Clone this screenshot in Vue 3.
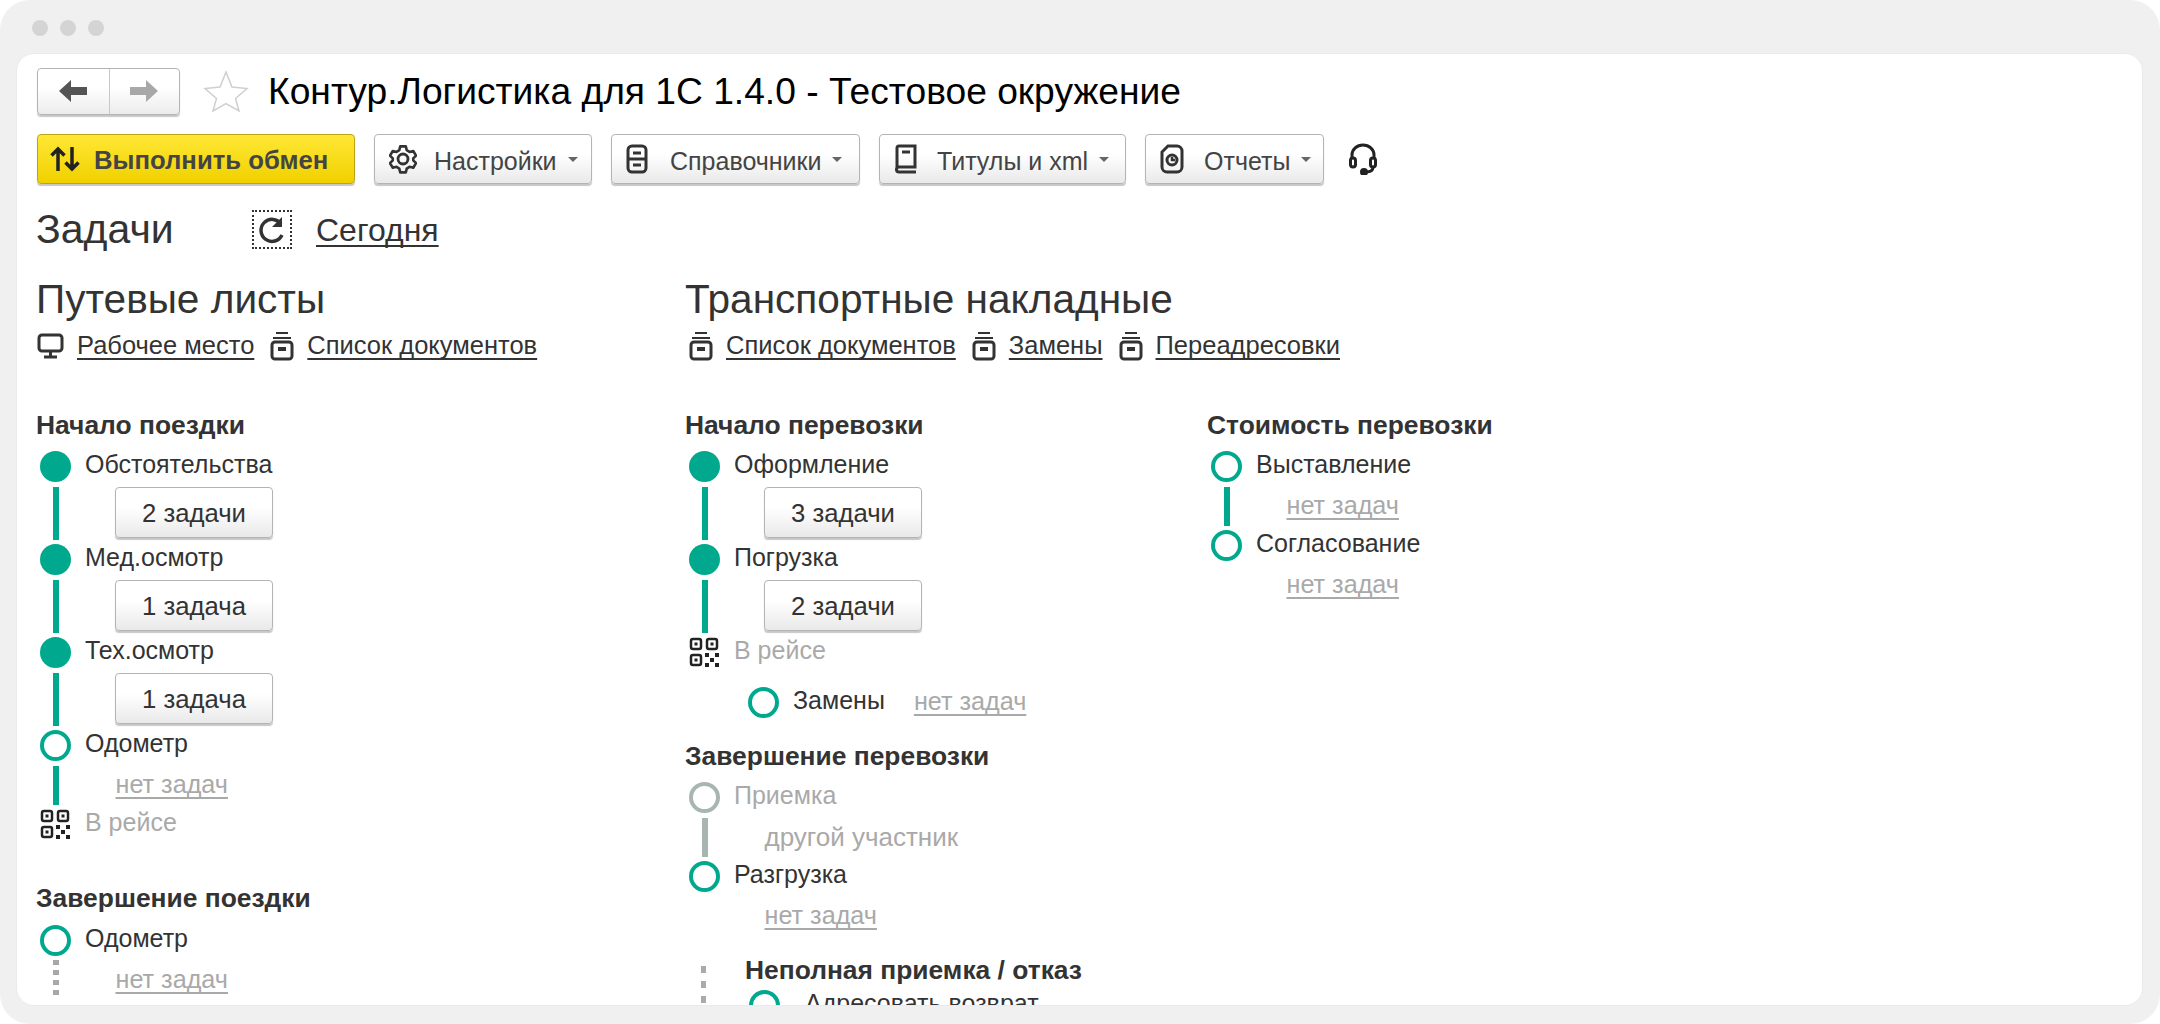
<script setup>
const col1a = [
  { node: 'filled', label: 'Обстоятельства', task: '2 задачи', line: 'green' },
  { node: 'filled', label: 'Мед.осмотр', task: '1 задача', line: 'green' },
  { node: 'filled', label: 'Тех.осмотр', task: '1 задача', line: 'green' },
  { node: 'open', label: 'Одометр', none: 'нет задач', line: 'green' },
  { node: 'qr', label: 'В рейсе', muted: true }
]
const col1b = [{ node: 'open', label: 'Одометр', none: 'нет задач', line: 'dotted' }]
const col2a = [
  { node: 'filled', label: 'Оформление', task: '3 задачи', line: 'green' },
  { node: 'filled', label: 'Погрузка', task: '2 задачи', line: 'green' },
  { node: 'qr', label: 'В рейсе', muted: true }
]
const col2b = [
  { node: 'gray', label: 'Приемка', muted: true, other: 'другой участник', line: 'gray' },
  { node: 'open', label: 'Разгрузка', none: 'нет задач', line: 'blank' }
]
const col3 = [
  { node: 'open', label: 'Выставление', none: 'нет задач', line: 'green' },
  { node: 'open', label: 'Согласование', none: 'нет задач', line: 'blank' }
]
const groups = [
  { cls: 'col-a', title: 'Путевые листы', links: [['monitor', 'Рабочее место'], ['box', 'Список документов']] },
  { cls: 'col-b', title: 'Транспортные накладные', links: [['box', 'Список документов'], ['box', 'Замены'], ['box', 'Переадресовки']] }
]
const tools = [
  { icon: 'gear', label: 'Настройки', cls: 't1' },
  { icon: 'ref', label: 'Справочники', cls: 't2' },
  { icon: 'book', label: 'Титулы и xml', cls: 't3' },
  { icon: 'report', label: 'Отчеты', cls: 't4' }
]
</script>

<template>
  <div class="frame">
    <div class="dots"><i></i><i></i><i></i></div>
    <div class="window">
      <header class="head">
        <div class="nav">
          <button class="nav-btn"><svg width="28" height="22" viewBox="0 0 28 22"><path d="M0 11 12 0v7h16v8H12v7z" fill="#555"/></svg></button>
          <button class="nav-btn"><svg width="28" height="22" viewBox="0 0 28 22"><path d="M28 11 16 0v7H0v8h16v7z" fill="#a8a8a8"/></svg></button>
        </div>
        <svg class="star" width="46" height="43" viewBox="0 0 46 43"><path d="M23 2l6 15 15 1.500-11.500 10L36 41 23 33.500 10 41l3.500-12.500L2 18.500 17 17z" fill="#fff" stroke="#cfcfcf" stroke-width="1.500"/></svg>
        <h1 class="title">Контур.Логистика для 1С 1.4.0 - Тестовое окружение</h1>
      </header>

      <div class="toolbar">
        <button class="btn exec">
          <svg width="30" height="26" viewBox="0 0 30 26" fill="none" stroke="#222" stroke-width="3.500"><path d="M8 25V3M1.500 9.500 8 3l6.500 6.500M22 1v22M15.500 16.500 22 23l6.500-6.500"/></svg>
          <span class="exec-label">Выполнить обмен</span>
        </button>
        <button v-for="t in tools" :key="t.label" class="btn tool" :class="t.cls">
          <svg v-if="t.icon === 'gear'" width="28" height="30" viewBox="0 0 28 30" fill="none" stroke="#333" stroke-width="2.800" stroke-linejoin="round"><path d="M11 2h6l1 4 3 2 4-1 3 5-3 3v2l3 3-3 5-4-1-3 2-1 4h-6l-1-4-3-2-4 1-3-5 3-3v-2l-3-3 3-5 4 1 3-2z" transform="translate(1 .5) scale(.93)"/><circle cx="14" cy="15" r="5"/></svg>
          <svg v-else-if="t.icon === 'ref'" width="22" height="30" viewBox="0 0 22 30" fill="none" stroke="#333" stroke-width="3"><rect x="2" y="2" width="18" height="26" rx="4"/><path d="M2 15h18M7 9h8M7 21h8"/></svg>
          <svg v-else-if="t.icon === 'book'" width="24" height="30" viewBox="0 0 24 30" fill="none" stroke="#333" stroke-width="3"><path d="M3 24V4a2 2 0 0 1 2-2h16v21H5a2.500 2.500 0 0 0 0 5h17"/><path d="M8 8h8"/></svg>
          <svg v-else width="24" height="30" viewBox="0 0 24 30" fill="none" stroke="#333" stroke-width="3"><path d="M8 2h9a5 5 0 0 1 5 5v16a5 5 0 0 1-5 5H7a5 5 0 0 1-5-5V8z"/><circle cx="12" cy="16" r="5"/><path d="M12 13v3h3" stroke-width="2.500"/></svg>
          <span class="tool-label">{{ t.label }}</span>
          <b class="caret"></b>
        </button>
        <svg class="headset" width="30" height="32" viewBox="0 0 30 32" fill="none" stroke="#222" stroke-width="3"><path d="M4 15v-3a11 10 0 0 1 22 0v3"/><rect x="2.500" y="15" width="5" height="9" rx="2.500"/><rect x="22.500" y="15" width="5" height="9" rx="2.500"/><path d="M25 24c0 4-3 5-7 5"/><circle cx="16" cy="29" r="2.500" fill="#222"/></svg>
      </div>

      <div class="tasks-row">
        <h2 class="tasks">Задачи</h2>
        <span class="refresh"><svg width="30" height="30" viewBox="0 0 30 30" fill="none" stroke="#333" stroke-width="3.500"><path d="M25 20a11 11 0 1 1-1-11"/><path d="M25 2v10h-10z" fill="#333" stroke="none"/></svg></span>
        <a class="link today">Сегодня</a>
      </div>

      <div class="columns">
        <section v-for="(g, gi) in groups" :key="g.title" class="group" :class="g.cls">
          <h3 class="group-title">{{ g.title }}</h3>
          <div class="links">
            <span v-for="l in g.links" :key="l[1]" class="doc-link">
              <svg v-if="l[0] === 'monitor'" width="27" height="26" viewBox="0 0 27 26" fill="none" stroke="#333" stroke-width="3"><rect x="2" y="2" width="23" height="16" rx="3"/><path d="M13.500 18v5M7 24h13"/></svg>
              <svg v-else width="24" height="30" viewBox="0 0 24 30" fill="none" stroke="#333" stroke-width="3"><path d="M6 2h12" stroke-width="2"/><path d="M3 7h18" stroke-width="2"/><rect x="2" y="11" width="20" height="17" rx="3"/><path d="M8 18h8" stroke-width="4"/></svg>
              <a class="link">{{ l[1] }}</a>
            </span>
          </div>

          <div v-if="gi === 0" class="flow">
            <h4 class="sub">Начало поездки</h4>
            <div v-for="s in col1a" :key="s.label" class="step" :class="{ 'step-qr': s.node === 'qr' }">
              <div class="row">
                <svg v-if="s.node === 'qr'" class="qr" width="30" height="30" viewBox="0 0 30 30"><g fill="none" stroke="#222" stroke-width="2.500"><rect x="2" y="2" width="10" height="10" rx="2"/><rect x="18" y="2" width="10" height="10" rx="2"/><rect x="2" y="18" width="10" height="10" rx="2"/></g><g fill="#222"><rect x="5.500" y="5.500" width="3" height="3"/><rect x="21.500" y="5.500" width="3" height="3"/><rect x="5.500" y="21.500" width="3" height="3"/><rect x="16" y="16" width="4" height="4"/><rect x="26" y="16" width="4" height="4"/><rect x="21" y="21" width="4" height="4"/><rect x="16" y="26" width="4" height="4"/><rect x="26" y="26" width="4" height="4"/></g></svg>
                <i v-else class="node" :class="s.node"></i>
                <span class="label" :class="{ muted: s.muted }">{{ s.label }}</span>
              </div>
              <div v-if="s.line" class="conn" :class="{ tall: s.task }">
                <i class="line" :class="s.line"></i>
                <button v-if="s.task" class="btn task">{{ s.task }}</button>
                <a v-else class="link none">{{ s.none }}</a>
              </div>
            </div>
            <h4 class="sub second">Завершение поездки</h4>
            <div v-for="s in col1b" :key="s.label" class="step">
              <div class="row"><i class="node" :class="s.node"></i><span class="label">{{ s.label }}</span></div>
              <div class="conn"><i class="line" :class="s.line"></i><a class="link none">{{ s.none }}</a></div>
            </div>
          </div>

          <div v-else class="flow-cols">
            <div class="flow mid">
              <h4 class="sub">Начало перевозки</h4>
              <div v-for="s in col2a" :key="s.label" class="step" :class="{ 'step-qr': s.node === 'qr' }">
                <div class="row">
                  <svg v-if="s.node === 'qr'" class="qr" width="30" height="30" viewBox="0 0 30 30"><g fill="none" stroke="#222" stroke-width="2.500"><rect x="2" y="2" width="10" height="10" rx="2"/><rect x="18" y="2" width="10" height="10" rx="2"/><rect x="2" y="18" width="10" height="10" rx="2"/></g><g fill="#222"><rect x="5.500" y="5.500" width="3" height="3"/><rect x="21.500" y="5.500" width="3" height="3"/><rect x="5.500" y="21.500" width="3" height="3"/><rect x="16" y="16" width="4" height="4"/><rect x="26" y="16" width="4" height="4"/><rect x="21" y="21" width="4" height="4"/><rect x="16" y="26" width="4" height="4"/><rect x="26" y="26" width="4" height="4"/></g></svg>
                  <i v-else class="node" :class="s.node"></i>
                  <span class="label" :class="{ muted: s.muted }">{{ s.label }}</span>
                </div>
                <div v-if="s.line" class="conn tall">
                  <i class="line" :class="s.line"></i>
                  <button class="btn task">{{ s.task }}</button>
                </div>
              </div>
              <div class="inline-step">
                <i class="node open"></i>
                <span class="label">Замены</span>
                <a class="link none">нет задач</a>
              </div>
              <h4 class="sub third">Завершение перевозки</h4>
              <div v-for="s in col2b" :key="s.label" class="step">
                <div class="row"><i class="node" :class="s.node"></i><span class="label" :class="{ muted: s.muted }">{{ s.label }}</span></div>
                <div class="conn">
                  <i class="line" :class="s.line"></i>
                  <span v-if="s.other" class="other">{{ s.other }}</span>
                  <a v-else class="link none">{{ s.none }}</a>
                </div>
              </div>
              <div class="partial">
                <i class="dash"></i>
                <div class="partial-body">
                  <h4 class="sub">Неполная приемка / отказ</h4>
                  <div class="row"><i class="node open"></i><span class="label wide">Адресовать возврат</span></div>
                </div>
              </div>
            </div>
            <div class="flow last">
              <h4 class="sub">Стоимость перевозки</h4>
              <div v-for="s in col3" :key="s.label" class="step">
                <div class="row"><i class="node" :class="s.node"></i><span class="label">{{ s.label }}</span></div>
                <div class="conn">
                  <i class="line" :class="s.line"></i>
                  <a class="link none">{{ s.none }}</a>
                </div>
              </div>
            </div>
          </div>
        </section>
      </div>
    </div>
  </div>
</template>

<style>
html, body { margin: 0; background: #fff; }
</style>

<style scoped>
.frame {
  box-sizing: border-box;
  height: 1024px;
  padding: 0 17px 18px 16px;
  background: #f0f0f0;
  border-radius: 30px;
  overflow: hidden;
  display: flex;
  flex-direction: column;
  font-family: "Liberation Sans", Arial, sans-serif;
  color: #333;
}
.dots { display: flex; gap: 12px; height: 53px; padding: 20px 0 0 16px; box-sizing: border-box; flex: none; }
.dots i { width: 16px; height: 16px; border-radius: 50%; background: #d4d4d4; }
.window {
  flex: 1;
  min-height: 0;
  background: #fff;
  border: 1px solid #eaeaea;
  border-radius: 18px;
  overflow: hidden;
  box-sizing: border-box;
  padding: 13px 0 0 19px;
}
.head { display: flex; align-items: center; height: 48px; margin-left: 1px; }
.nav { display: flex; width: 143px; height: 47px; box-sizing: border-box; border: 1px solid #b4b4b4; border-radius: 4px; background: linear-gradient(#fff 40%, #ececec); box-shadow: 0 2px 1px rgba(0,0,0,.22); }
.nav-btn { width: 50%; border: 0; background: none; padding: 0; display: flex; align-items: center; justify-content: center; }
.nav-btn + .nav-btn { border-left: 1px solid #c8c8c8; }
.star { margin-left: 23px; }
.title { margin: 0 0 0 19px; font-size: 37.200px; font-weight: 400; color: #000; line-height: 48px; white-space: nowrap; }
.toolbar { display: flex; align-items: center; margin: 19px 0 0 1px; height: 50px; }
.btn { box-sizing: border-box; font: inherit; font-size: 25px; color: #444; border: 1px solid #b4b4b4; border-radius: 4px; background: linear-gradient(#fff 40%, #e9e9e9); box-shadow: 0 2px 1px rgba(0,0,0,.22); display: flex; align-items: center; padding: 0; white-space: nowrap; }
.exec { width: 318px; height: 50px; padding-left: 12px; gap: 14px; background: linear-gradient(#ffe835, #f0d000); border-color: #bba515; font-weight: 700; font-size: 25.700px; color: #444; margin-right: 19px; }
.exec-label { padding-top: 3px; }
.tool { height: 50px; padding-left: 14px; margin-right: 19px; }
.tool-label { margin-left: 20px; padding-top: 4px; }
.t1 { width: 218px; }
.t1 .tool-label { margin-left: 17px; }
.t2 { width: 249px; }
.t2 .tool-label { margin-left: 22px; }
.t3 { width: 247px; }
.t3 .tool-label { margin-left: 19px; }
.t4 { width: 179px; margin-right: 24px; }
.caret { margin-left: 11px; width: 0; height: 0; border: 5px solid transparent; border-top-color: #666; border-bottom: 0; }
.tasks-row { display: flex; align-items: center; margin-top: 26px; height: 39px; }
.tasks { margin: 0; font-size: 41px; font-weight: 400; width: 216px; line-height: 41px; }
.refresh { box-sizing: border-box; width: 40px; height: 39px; border: 2px dotted #333; display: flex; align-items: center; justify-content: center; }
.link { color: #333; text-decoration: underline; text-underline-offset: 4px; text-decoration-thickness: 2px; text-decoration-skip-ink: none; white-space: nowrap; }
.today { margin-left: 24px; font-size: 32px; line-height: 36px; }
.columns { display: flex; margin-top: 31px; }
.group-title { margin: 0; font-size: 40.600px; font-weight: 400; line-height: 38px; white-space: nowrap; }
.col-a { width: 649px; flex: none; }
.links { display: flex; gap: 16px; margin: 12px 0 0 1px; height: 31px; font-size: 25.500px; align-items: center; }
.doc-link { display: flex; align-items: center; gap: 13px; }
.col-b .links { margin-left: 4px; }
.flow { margin-top: 49px; }
.flow-cols { display: flex; }
.mid { width: 522px; flex: none; }
.sub { margin: 0; font-size: 26.400px; font-weight: 700; line-height: 30px; white-space: nowrap; }
.flow > .sub:first-child { margin-bottom: 11px; }
.step { padding-left: 4px; }
.row { display: flex; height: 36px; font-size: 25px; }
.node { box-sizing: border-box; flex: none; width: 31px; height: 31px; border-radius: 50%; }
.node.filled { background: #00a98d; }
.node.open { border: 4px solid #00a98d; background: #fff; }
.node.gray { border: 4px solid #a8b6b1; background: #fff; }
.qr { flex: none; margin-right: 1px; }
.label { margin-left: 14px; line-height: 27px; white-space: nowrap; }
.label.wide { margin-left: 25px; }
.muted { color: #a9a9a9; }
.conn { display: flex; height: 43px; }
.conn.tall { height: 57px; }
.line { flex: none; box-sizing: border-box; width: 6px; height: 39px; margin-left: 12.500px; background: #00a98d; }
.tall .line { height: 53px; }
.line.gray { background: #a8b6b1; }
.line.blank { background: none; }
.line.dotted { background: repeating-linear-gradient(#a8a8a8 0 5px, transparent 5px 10px); height: 40px; margin-top: -1px; }
.task { margin-left: 56.500px; width: 158px; height: 51px; padding-top: 2px; justify-content: center; color: #333; font-size: 25.700px; }
.none { margin-left: 57px; font-size: 25.200px; line-height: 36px; color: #a9a9a9; height: 32px; }
.other { margin-left: 57px; font-size: 26px; line-height: 38px; color: #a9a9a9; white-space: nowrap; }
.inline-step { display: flex; align-items: flex-start; margin: 14px 0 0 63px; font-size: 25px; height: 31px; }
.inline-step .none { margin-left: 29px; line-height: 28px; }
.third { margin-top: 23px; margin-bottom: 11px; }
.second { margin-top: 38px; margin-bottom: 12px; }
.partial { display: flex; margin-top: 15px; padding-left: 16px; }
.dash { flex: none; width: 5px; height: 45px; margin-top: 11px; background: repeating-linear-gradient(#aaa 0 7px, transparent 7px 15px); }
.partial-body { margin-left: 39px; }
.partial-body .sub { margin-bottom: 5px; }
.partial-body .node { margin-left: 4px; }
</style>
